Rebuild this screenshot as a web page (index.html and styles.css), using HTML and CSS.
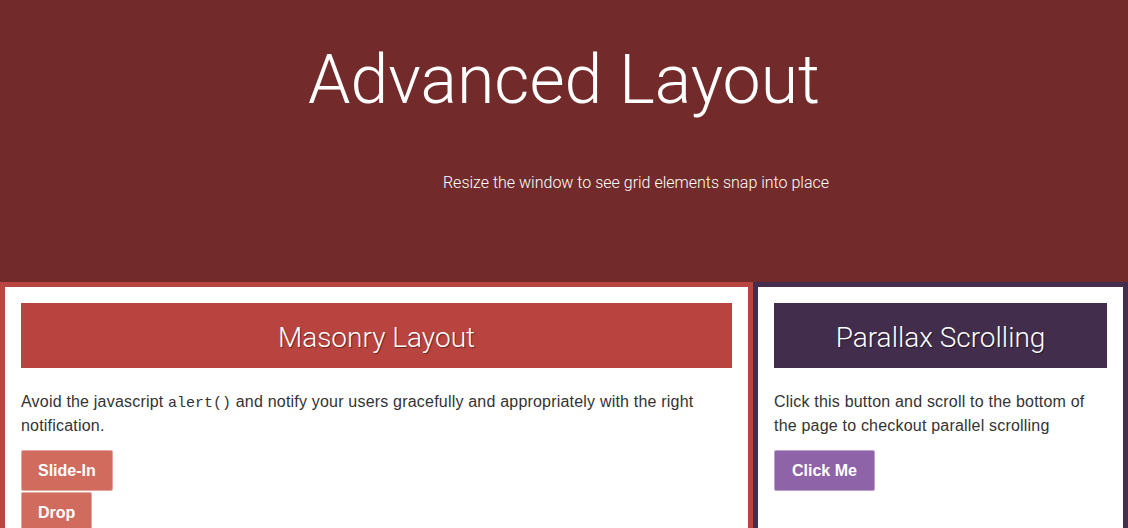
FILE: index.html
```html
<!DOCTYPE html>
<html>
<head>
<meta charset="utf-8">
<link rel="stylesheet" href="styles.css">
</head>
<body>
<header class="hero">
  <h1 class="hero-title">Advanced Layout</h1>
  <p class="hero-sub">Resize the window to see grid elements snap into place</p>
</header>
<main class="grid">
  <section class="card card-red">
    <h2 class="card-title">Masonry Layout</h2>
    <p class="card-text">Avoid the javascript <code>alert()</code> and notify your users gracefully and appropriately with the right notification.</p>
    <div class="btn-stack">
      <button class="btn btn-red">Slide-In</button>
      <button class="btn btn-red">Drop</button>
    </div>
  </section>
  <section class="card card-purple">
    <h2 class="card-title">Parallax Scrolling</h2>
    <p class="card-text">Click this button and scroll to the bottom of the page to checkout parallel scrolling</p>
    <div class="btn-stack">
      <button class="btn btn-purple">Click Me</button>
    </div>
  </section>
</main>
</body>
</html>
```
FILE: styles.css
```css
html, body {
  margin: 0;
  padding: 0;
  background: #ffffff;
  font-family: "Liberation Sans", Arial, sans-serif;
  color: #333333;
  overflow: hidden;
}

.hero {
  background: #722b2a;
  height: 282px;
  box-sizing: border-box;
  padding-top: 40px;
  color: #ffffff;
  text-align: center;
}

.hero-title {
  margin: 0;
  font-family: Roboto, "Liberation Sans", sans-serif;
  font-weight: 300;
  font-size: 68px;
  line-height: 80px;
}

.hero-sub {
  margin: 53px 0 0 144px;
  font-family: Roboto, "Liberation Sans", sans-serif;
  font-weight: 300;
  font-size: 16px;
  line-height: 20px;
}

.grid {
  display: grid;
  grid-template-columns: 753px 1fr;
  height: 246px;
}

.card {
  border: 5px solid;
  border-bottom: 0;
  padding: 16px 16px 0;
  background: #ffffff;
}

.card-red { border-color: #b94540; }
.card-purple { border-color: #432e4d; }

.card-title {
  margin: 0;
  height: 61px;
  padding-top: 4px;
  line-height: 62px;
  overflow: hidden;
  text-align: center;
  color: #ffffff;
  font-family: Roboto, "Liberation Sans", sans-serif;
  font-weight: 300;
  font-size: 28px;
  text-shadow: 1px 1px 1px rgba(0, 0, 0, 0.45);
}

.card-red .card-title { background: #b9443f; }
.card-purple .card-title { background: #422d4c; }

.card-text {
  margin: 22px 0 12px;
  font-size: 16px;
  line-height: 24px;
  letter-spacing: 0.2px;
  color: #333333;
}

.card-text code {
  font-family: "Liberation Mono", monospace;
  font-size: 15px;
  line-height: 1;
  letter-spacing: 0;
}

.btn-stack {
  display: flex;
  flex-direction: column;
  align-items: flex-start;
  gap: 1px;
}

.btn {
  font-family: "Liberation Sans", Arial, sans-serif;
  font-weight: bold;
  font-size: 16px;
  color: #ffffff;
  height: 41px;
  padding: 0 16px;
  border: 1px solid rgba(255, 255, 255, 0.4);
  border-radius: 2px;
  cursor: pointer;
}

.btn-red { background: #d06b5e; }
.btn-purple { background: #8e63a8; padding: 0 17px; }
```
